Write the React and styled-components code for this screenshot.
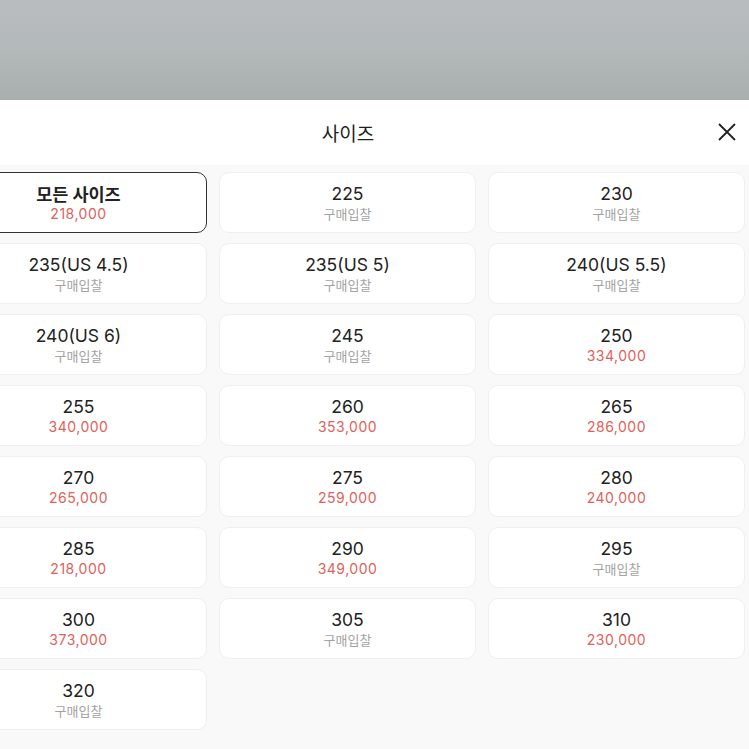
import React from "react";
import styled, { createGlobalStyle } from "styled-components";

const GlobalStyle = createGlobalStyle`
  html, body {
    margin: 0;
    padding: 0;
    background: #f9f9f9;
    font-family: Inter, "Noto Sans CJK KR", sans-serif;
    overflow: hidden;
  }
`;

const Backdrop = styled.div`
  height: 100px;
  background: linear-gradient(180deg, #b9bdc0 0%, #b3b8b9 50%, #a9afad 100%);
`;

// the sheet is wider than the window and shifted left, as in the capture
const Sheet = styled.div`
  background: #f9f9f9;
  margin-left: -50px;
  width: 800px;
`;

const Header = styled.div`
  position: relative;
  width: 796px;
  height: 65px;
  display: flex;
  align-items: center;
  justify-content: center;
  background: #fff;
  box-shadow: 4px 0 0 #fff;
`;

const Title = styled.h2`
  margin: 0;
  font-size: 19px;
  font-weight: 400;
  color: #1f1f1f;
  font-family: "Noto Sans CJK KR", sans-serif;
`;

const CloseButton = styled.button`
  all: unset;
  position: absolute;
  right: 10px;
  top: 23px;
  width: 18px;
  height: 18px;
  display: flex;
  align-items: center;
  justify-content: center;
  cursor: pointer;
`;

const Grid = styled.div`
  display: grid;
  grid-template-columns: repeat(3, 257px);
  column-gap: 12px;
  row-gap: 10px;
  padding-top: 7px;
`;

const Cell = styled.button`
  all: unset;
  box-sizing: border-box;
  height: 61px;
  display: flex;
  flex-direction: column;
  align-items: center;
  justify-content: center;
  gap: 1px;
  background: #fff;
  border: ${(p) => (p.$active ? "1.5px solid #333" : "1px solid #efefef")};
  border-radius: 10px;
  cursor: pointer;
`;

const Size = styled.span`
  font-size: 17.5px;
  line-height: 21px;
  color: #222;
  font-weight: ${(p) => (p.$active ? 700 : 400)};
  font-family: ${(p) =>
    p.$active ? '"Noto Sans CJK KR", sans-serif' : 'Inter, "Noto Sans CJK KR", sans-serif'};
`;

const Price = styled.span`
  font-size: ${(p) => (p.$bid ? "13px" : "14px")};
  letter-spacing: ${(p) => (p.$bid ? "0" : "0.5px")};
  line-height: 18px;
  color: ${(p) => (p.$bid ? "#a3a3a3" : "#e0615a")};
  font-family: Inter, "Noto Sans CJK KR", sans-serif;
`;

const sizes = [
  ["모든 사이즈", "218,000"],
  ["225", null],
  ["230", null],
  ["235(US 4.5)", null],
  ["235(US 5)", null],
  ["240(US 5.5)", null],
  ["240(US 6)", null],
  ["245", null],
  ["250", "334,000"],
  ["255", "340,000"],
  ["260", "353,000"],
  ["265", "286,000"],
  ["270", "265,000"],
  ["275", "259,000"],
  ["280", "240,000"],
  ["285", "218,000"],
  ["290", "349,000"],
  ["295", null],
  ["300", "373,000"],
  ["305", null],
  ["310", "230,000"],
  ["320", null],
];

export default function App() {
  return (
    <>
      <GlobalStyle />
      <Backdrop />
      <Sheet>
        <Header>
          <Title>사이즈</Title>
          <CloseButton>
            <svg width="18" height="18" viewBox="0 0 18 18">
              <path d="M1 1 L17 17 M17 1 L1 17" stroke="#222" strokeWidth="1.8" />
            </svg>
          </CloseButton>
        </Header>
        <Grid>
          {sizes.map(([size, price], i) => (
            <Cell key={size} $active={i === 0}>
              <Size $active={i === 0}>{size}</Size>
              <Price $bid={!price}>{price || "구매입찰"}</Price>
            </Cell>
          ))}
        </Grid>
      </Sheet>
    </>
  );
}
